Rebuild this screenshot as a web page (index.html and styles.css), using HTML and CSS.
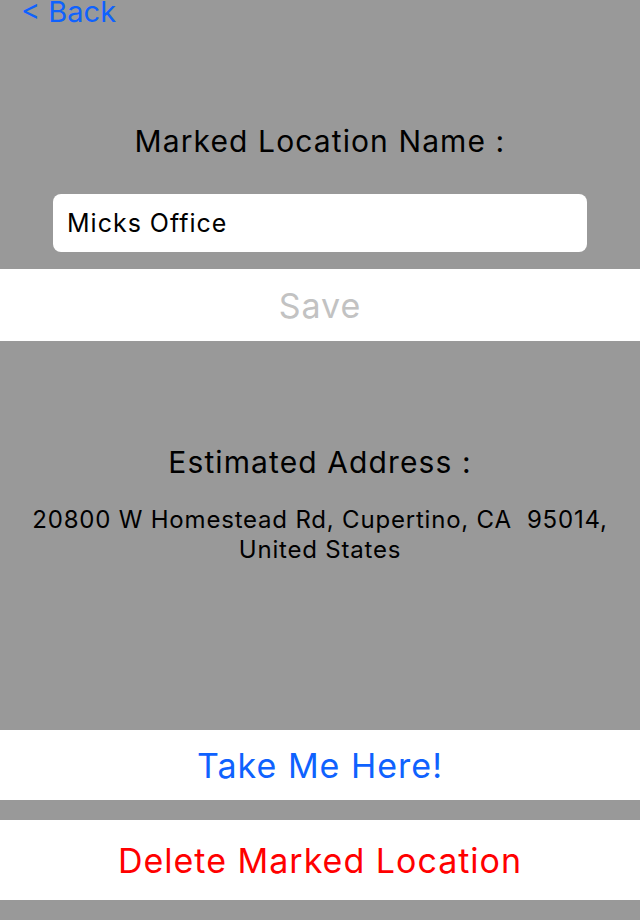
FILE: index.html
```html
<!DOCTYPE html>
<html lang="en">

<head>
    <meta charset="UTF-8">
    <meta name="viewport" content="width=device-width, initial-scale=1.0">
    <title>Marked Location</title>
    <link rel="stylesheet" href="styles.css">
</head>

<body>
    <div class="screen">
        <div class="topbar">
            <a class="back" href="#">&lt; Back</a>
        </div>

        <div class="name-section">
            <h2 class="label">Marked Location Name :</h2>
            <input class="name-input" type="text" value="Micks Office">
        </div>

        <button class="row-button save" disabled>Save</button>

        <div class="address-section">
            <h2 class="label">Estimated Address :</h2>
            <p class="address">20800 W Homestead Rd, Cupertino, CA&nbsp; 95014,<br>United States</p>
        </div>

        <button class="row-button go">Take Me Here!</button>
        <button class="row-button delete">Delete Marked Location</button>
    </div>
</body>
</html>
```

FILE: styles.css
```css
body {
    font-family: 'Inter', 'Roboto', sans-serif;
    background-color: #999999;
    color: #000;
    margin: 0;
    padding: 0;
}

.screen {
    display: flex;
    flex-direction: column;
    width: 640px;
    height: 920px;
    overflow: hidden;
}

.topbar {
    height: 30px;
    padding-left: 21px;
}

.back {
    display: block;
    font-size: 29px;
    line-height: 24px;
    color: #0f62fe;
    text-decoration: none;
}

.name-section {
    display: flex;
    flex-direction: column;
    align-items: center;
    padding-top: 91px;
}

.label {
    margin: 0;
    font-size: 30px;
    font-weight: normal;
    letter-spacing: 1.1px;
    line-height: 40px;
    text-align: center;
}

.name-input {
    box-sizing: border-box;
    width: 534px;
    height: 58px;
    margin: 33px 0 17px;
    padding: 0 14px;
    border: none;
    border-radius: 8px;
    background: #fff;
    font-family: inherit;
    font-size: 25px;
    letter-spacing: 1px;
    color: #000;
    outline: none;
}

.row-button {
    display: block;
    width: 100%;
    border: none;
    background: #fff;
    font-family: inherit;
    font-size: 34px;
    letter-spacing: 1px;
    text-align: center;
    padding: 0;
    cursor: pointer;
}

.save {
    height: 72px;
    color: #c2c2c2;
}

.address-section {
    height: 389px;
    padding-top: 101px;
    box-sizing: border-box;
}

.address {
    margin: 23px 0 0;
    font-size: 24px;
    letter-spacing: 0.8px;
    line-height: 30px;
    text-align: center;
}

.go {
    height: 70px;
    color: #0f62fe;
}

.delete {
    height: 80px;
    margin-top: 20px;
    color: #ff0000;
}
```
